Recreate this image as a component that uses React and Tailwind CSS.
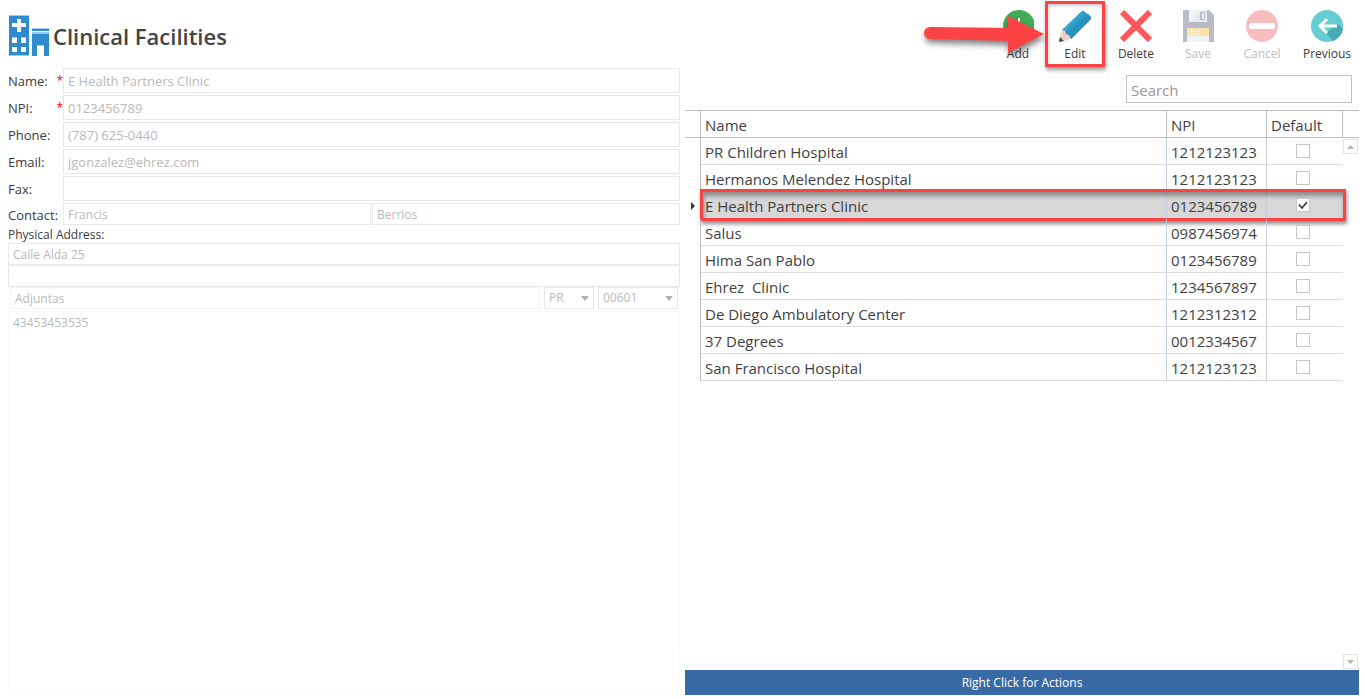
import { useState } from "react";

const facilities = [
  { id: 1, name: "PR Children Hospital", npi: "1212123123", isDefault: false },
  { id: 2, name: "Hermanos Melendez Hospital", npi: "1212123123", isDefault: false },
  { id: 3, name: "E Health Partners Clinic", npi: "0123456789", isDefault: true },
  { id: 4, name: "Salus", npi: "0987456974", isDefault: false },
  { id: 5, name: "Hima San Pablo", npi: "0123456789", isDefault: false },
  { id: 6, name: "Ehrez  Clinic", npi: "1234567897", isDefault: false },
  { id: 7, name: "De Diego Ambulatory Center", npi: "1212312312", isDefault: false },
  { id: 8, name: "37 Degrees", npi: "0012334567", isDefault: false },
  { id: 9, name: "San Francisco Hospital", npi: "1212123123", isDefault: false },
];

const fields = [
  { id: "name", label: "Name:", value: "E Health Partners Clinic", required: true },
  { id: "npi", label: "NPI:", value: "0123456789", required: true },
  { id: "phone", label: "Phone:", value: "(787) 625-0440" },
  { id: "email", label: "Email:", value: "jgonzalez@ehrez.com" },
  { id: "fax", label: "Fax:", value: "" },
];

const BuildingIcon = () => (
  <svg width="41" height="42" viewBox="0 0 41 42" className="shrink-0">
    <path fill="#2f8bcc" d="M0 1h20v40H0z" />
    <path fill="#9ccbea" d="M0 0h20v1H0zM0 40h20v1H0z" />
    <path fill="#fff" d="M8 4h4v4h5v4h-5v5H8v-5H3V8h5zM3 23h5v5H3zM12 23h5v5h-5zM3 32h5v5H3zM12 32h5v5h-5z" />
    <path fill="#9ccbea" d="M23 13h17v1H23zM23 17h17v2H23z" />
    <path fill="#2f8bcc" d="M23 14h17v2H23zM23 19h17v22h-5V30h-7v11h-5z" />
    <path fill="#9ccbea" d="M3 22h5v1H3zM12 22h5v1h-5zM28 30h7v1h-7z" />
  </svg>
);

const AddIcon = () => (
  <svg width="32" height="32" viewBox="0 0 32 32">
    <circle cx="17" cy="16" r="16" fill="#3fae55" />
    <path d="M17 8v16M9 16h16" stroke="#fff" strokeWidth="2" />
  </svg>
);

const EditIcon = () => (
  <svg width="32" height="32" viewBox="0 0 32 32">
    <path fill="#2c9cc6" d="M3 20 22 2q2-2 4 0l5 4q2 2 0 4L12 29z" />
    <path fill="#2492bb" d="M7 24 29 4l2 2q2 2 0 4L12 29z" />
    <path fill="#3aa6cd" d="M3 20 22 2l2-1 2 1L5 22z" />
    <path fill="#f6cfc4" d="M3 20l3 1 1 3 3 1 2 4-11 3-1-1z" />
    <path fill="#44506a" d="M1 27l4 4-4 1q-1 0-1-1z" />
  </svg>
);

const DeleteIcon = () => (
  <svg width="32" height="32" viewBox="0 0 32 32">
    <path d="M2 2l28 28M30 2 2 30" stroke="#ff575b" strokeWidth="6" />
  </svg>
);

const SaveIcon = () => (
  <svg width="32" height="32" viewBox="0 0 32 32">
    <path fill="#b9bcc8" d="M1 0h26l5 5v27H1z" />
    <path fill="#e8ebed" d="M7 0h18v12H7z" />
    <path fill="#f3f5f5" d="M7 0h12L7 12z" />
    <path fill="#b9bcc8" d="M18 2h5v8h-5z" />
    <path fill="#e8ebed" d="M20 3h2v6h-2z" />
    <path fill="#f1f3f4" d="M5 18h22v14H5z" />
    <path fill="#f9e2a3" d="M5 18h22v8H5z" />
    <path d="M8 21h6M8 24h10M16 21h2" stroke="#fff" strokeWidth="1" />
  </svg>
);

const CancelIcon = () => (
  <svg width="32" height="32" viewBox="0 0 32 32">
    <circle cx="16" cy="16" r="16" fill="#f7bdbf" />
    <rect x="3" y="13" width="26" height="6" rx="2" fill="#fff" />
  </svg>
);

const PreviousIcon = () => (
  <svg width="32" height="32" viewBox="0 0 32 32">
    <circle cx="16" cy="16" r="16" fill="#66cdd5" />
    <path fill="#47aab6" d="M15 23 27 14l5 5a16 16 0 0 1-10 12z" />
    <path d="M26 16H9M16 9l-7 7 7 7" fill="none" stroke="#fff" strokeWidth="3" />
  </svg>
);

const actions = [
  { label: "Add", icon: AddIcon, width: "w-[54px]" },
  { label: "Edit", icon: EditIcon, width: "w-[60px]", highlighted: true },
  { label: "Delete", icon: DeleteIcon, width: "w-[62px]" },
  { label: "Save", icon: SaveIcon, width: "w-[62px]", disabled: true },
  { label: "Cancel", icon: CancelIcon, width: "w-[66px]", disabled: true },
  { label: "Previous", icon: PreviousIcon, width: "w-[64px]" },
];

const Pointer = () => (
  <svg
    width="124"
    height="56"
    viewBox="0 0 124 56"
    className="absolute right-full top-1.5 pointer-events-none drop-shadow-[1px_4px_3px_rgba(0,0,0,0.5)]"
  >
    <path fill="#fc4343" d="M9 21 87 22V10L123 28 87 47V35L9 33a6 6 0 0 1 0-12z" />
  </svg>
);

const Toolbar = () => (
  <div className="flex justify-end h-[75px]">
    {actions.map(({ label, icon: Icon, width, disabled, highlighted }) => (
      <div key={label} className={`relative ${width}`}>
        <button
          type="button"
          disabled={disabled}
          className={`w-full pt-2.5 flex flex-col items-center text-[12px] leading-6 ${
            disabled ? "text-[#bdbdbd]" : "text-[#3c3c3c]"
          }`}
        >
          <Icon />
          {label}
        </button>
        {highlighted && (
          <>
            <span className="absolute inset-x-0 top-px h-[66px] border-3 border-[#fc4343] pointer-events-none shadow-[1px_3px_4px_rgba(0,0,0,0.4),inset_1px_2px_3px_rgba(0,0,0,0.2)]" />
            <Pointer />
          </>
        )}
      </div>
    ))}
  </div>
);

const TextField = ({ className = "", ...props }) => (
  <input
    type="text"
    disabled
    className={`min-w-0 border border-[#e8e8e8] bg-white px-1 text-[#b9b9b9] ${className}`}
    {...props}
  />
);

const SelectField = ({ label, value, width }) => (
  <div className={`relative ${width}`}>
    <select
      aria-label={label}
      disabled
      defaultValue={value}
      className="block w-full h-[22px] appearance-none border border-[#e8e8e8] bg-white px-1 text-[12px] text-[#b9b9b9] opacity-100"
    >
      <option>{value}</option>
    </select>
    <svg width="8" height="5" viewBox="0 0 8 5" className="absolute right-[5px] top-[9px] pointer-events-none">
      <path fill="#b0b0b0" d="M0 0h8L4 5z" />
    </svg>
  </div>
);

const FacilityForm = () => (
  <section className="min-w-0 flex flex-col px-px">
    <div className="h-[68px] pt-[15px] pl-px flex items-start gap-[3px]">
      <BuildingIcon />
      <h1 className="text-[22px] leading-[42px] font-semibold text-[#444]">Clinical Facilities</h1>
    </div>

    <form className="flex-1 flex flex-col text-[#3c3c3c]">
      <div className="flex flex-col gap-0.5">
        {fields.map((field) => (
          <div key={field.id} className="flex h-[25px]">
            <label htmlFor={field.id} className="w-[55px] shrink-0 flex justify-between text-[13px] leading-[26px]">
              {field.label}
              {field.required && <span className="text-[#f00] text-[12px]">*</span>}
            </label>
            <TextField id={field.id} defaultValue={field.value} className="flex-1 h-[25px] text-[13px]" />
          </div>
        ))}
        <div className="flex h-[22px]">
          <label htmlFor="contact" className="w-[55px] shrink-0 text-[13px] leading-6">
            Contact:
          </label>
          <div className="flex-1 flex gap-px">
            <TextField id="contact" defaultValue="Francis" className="flex-1 h-[22px] text-[12px]" />
            <TextField aria-label="Contact last name" defaultValue="Berrios" className="flex-1 h-[22px] text-[12px]" />
          </div>
        </div>
      </div>

      <label htmlFor="address" className="h-[18px] text-[12px] leading-5">
        Physical Address:
      </label>
      <TextField id="address" defaultValue="Calle Alda 25" className="h-[22px] text-[12px]" />
      <TextField aria-label="Address line 2" className="h-[22px] text-[12px]" />
      <div className="flex gap-1 px-0.5">
        <TextField aria-label="City" defaultValue="Adjuntas" className="flex-1 h-[22px] text-[12px] border-[#f3f3f3]" />
        <SelectField label="State" value="PR" width="w-[50px]" />
        <SelectField label="Zip code" value="00601" width="w-[80px]" />
      </div>
      <textarea
        aria-label="Notes"
        disabled
        defaultValue="43453453535"
        className="flex-1 mt-0.5 resize-none border border-[#fafafa] px-1 py-0.5 text-[12px] leading-[18px] text-[#b9b9b9]"
      />
    </form>
  </section>
);

const ScrollButton = ({ label, down }) => (
  <button
    type="button"
    aria-label={label}
    className="size-[15px] flex items-center justify-center border border-[#e3e3e3]"
  >
    <svg width="7" height="4" viewBox="0 0 7 4">
      <path fill="#b5b5b5" d={down ? "M0 0h7L3.5 4z" : "M0 4h7L3.5 0z"} />
    </svg>
  </button>
);

const FacilityRow = ({ facility, selected, onSelect }) => {
  const cell = `h-[27px] border-b border-[#dcdcdc] ${selected ? "bg-[#d7d7d7]" : ""}`;

  return (
    <tr className="relative" onClick={onSelect}>
      <td className="border-r border-[#bdbdbd]">
        {selected && (
          <>
            <svg width="4" height="8" viewBox="0 0 4 8" className="ml-1.5">
              <path fill="#333" d="M0 0l4 4-4 4z" />
            </svg>
            <span className="absolute left-[15px] -right-[3px] -top-[3px] h-8 border-3 border-[#fc4343] pointer-events-none shadow-[1px_3px_4px_rgba(0,0,0,0.45),inset_1px_4px_4px_rgba(0,0,0,0.35)]" />
          </>
        )}
      </td>
      <td className={`${cell} border-r border-r-[#c3d0de] pl-1 pt-0.5 whitespace-pre`}>{facility.name}</td>
      <td className={`${cell} border-r border-r-[#c3d0de] pl-1 pt-0.5`}>{facility.npi}</td>
      <td className={`${cell} pr-1`}>
        <div className="relative mx-auto size-3.5">
          <input
            type="checkbox"
            aria-label={`${facility.name} default`}
            defaultChecked={facility.isDefault}
            className="peer block size-3.5 appearance-none border border-[#c6c6c6] bg-white"
          />
          <svg
            width="14"
            height="14"
            viewBox="0 0 14 14"
            className="absolute inset-0 hidden peer-checked:block pointer-events-none"
          >
            <path d="M3 6.5l3 3.5 5-6" fill="none" stroke="#333" strokeWidth="1.5" />
          </svg>
        </div>
      </td>
    </tr>
  );
};

const FacilityList = () => {
  const [search, setSearch] = useState("");
  const [selectedId, setSelectedId] = useState(3);

  const rows = facilities.filter((f) => f.name.toLowerCase().includes(search.toLowerCase()));

  return (
    <section className="min-w-0 flex flex-col">
      <Toolbar />
      <div className="flex justify-end pr-[7px] pb-[7px]">
        <input
          type="search"
          aria-label="Search"
          placeholder="Search"
          value={search}
          onChange={(e) => setSearch(e.target.value)}
          className="w-[226px] h-7 border border-[#c3c3c3] px-1 pt-0.5 text-[15px] placeholder:text-[#999]"
        />
      </div>

      <div className="flex-1 flex">
        <div className="flex-1">
          <table className="w-full table-fixed border-separate border-spacing-0 text-[15px] leading-5 text-[#3f3f3f]">
            <colgroup>
              <col className="w-4" />
              <col />
              <col className="w-[100px]" />
              <col className="w-[76px]" />
            </colgroup>
            <thead>
              <tr className="text-left">
                <th className="h-7 border-y border-r border-[#bdbdbd]" />
                <th className="border-y border-r border-[#bdbdbd] pl-1 pt-0.5 font-normal">Name</th>
                <th className="border-y border-r border-[#bdbdbd] pl-1 pt-0.5 font-normal">NPI</th>
                <th className="border-y border-r border-[#bdbdbd] pl-1 pt-0.5 font-normal">Default</th>
              </tr>
            </thead>
            <tbody>
              {rows.map((facility) => (
                <FacilityRow
                  key={facility.id}
                  facility={facility}
                  selected={facility.id === selectedId}
                  onSelect={() => setSelectedId(facility.id)}
                />
              ))}
            </tbody>
          </table>
        </div>
        <div className="w-4 flex flex-col">
          <div className="h-7 border-y border-[#bdbdbd]" />
          <div className="flex-1 flex flex-col justify-between py-px">
            <ScrollButton label="Scroll up" />
            <ScrollButton label="Scroll down" down />
          </div>
        </div>
      </div>

      <footer className="bg-[#386ba6] text-white text-center text-[12px] leading-[25px]">
        Right Click for Actions
      </footer>
    </section>
  );
};

const App = () => (
  <main className="min-h-screen grid grid-cols-2 gap-1 pl-[7px] pr-1.5 pb-1 bg-white font-['Open_Sans','Noto_Sans',sans-serif]">
    <FacilityForm />
    <FacilityList />
  </main>
);

export default App;
